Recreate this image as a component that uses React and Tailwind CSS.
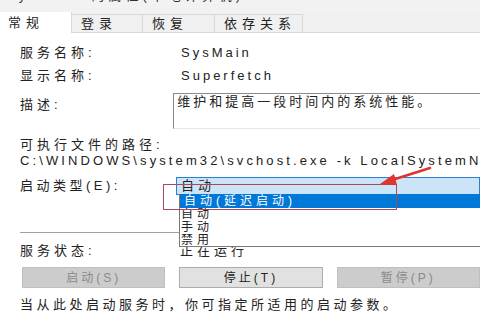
import React from "react";

const F = { fontFamily: "'Liberation Sans','Noto Sans CJK SC',sans-serif" };

function Tab({ label, active, w }) {
  return (
    <div
      className={
        active
          ? "h-[21px] bg-white border-r border-[#d9d9d9] flex items-center pl-[8px] mb-[-1px] relative z-10"
          : "h-[18px] bg-[#f0f0f0] border border-b-0 border-l-0 border-[#d9d9d9] flex items-center pl-[9px]"
      }
      style={{ width: w }}
    >
      <span className="text-[13px] leading-none tracking-[5px] text-[#222]">{label}</span>
    </div>
  );
}

export default function App() {
  return (
    <div className="w-[480px] h-[320px] bg-white relative overflow-hidden text-[#222]" style={F}>
      {/* window title strip (cut off) */}
      <div className="h-[13px] bg-[#f2f2f2] overflow-hidden">
        <div className="mt-[-12px] pl-[6px] text-[13px] leading-[16px] tracking-[4px] text-[#333] whitespace-nowrap">
          SysMain 的属性(本地计算机)
        </div>
      </div>
      {/* tabs */}
      <div className="h-[20px] bg-[#f0f0f0] border-b border-[#d9d9d9] flex items-end">
        <Tab label="常规" active w={72} />
        <Tab label="登录" w={71} />
        <Tab label="恢复" w={72} />
        <Tab label="依存关系" w={88} />
      </div>

      <div className="pl-[20px] mt-[8px]">
        <div className="h-[23px] flex items-center">
          <div className="w-[161px] text-[13px] tracking-[4px]">服务名称:</div>
          <div className="text-[13px] tracking-[3px]">SysMain</div>
        </div>
        <div className="h-[23px] flex items-center">
          <div className="w-[161px] text-[13px] tracking-[4px]">显示名称:</div>
          <div className="text-[13px] tracking-[3px]">Superfetch</div>
        </div>
        <div className="mt-[6px] flex">
          <div className="w-[160px] pt-[4px] text-[13px] leading-[16px] tracking-[4px]">描述:</div>
          <div className="w-[320px] h-[36px] border border-r-0 border-t-[#8a8a8a] border-l-[#8a8a8a] border-b-[#e6e6e6] pl-[3px] pt-[1px] text-[13px] leading-[14px] tracking-[3px] whitespace-nowrap">
            维护和提高一段时间内的系统性能。
          </div>
        </div>
        <div className="mt-[8px] h-[16px] text-[13px] leading-[16px] tracking-[4px]">可执行文件的路径:</div>
        <div className="h-[16px] text-[13px] leading-[16px] tracking-[3.1px] whitespace-nowrap overflow-hidden w-[460px]">
          C:\WINDOWS\system32\svchost.exe -k LocalSystemNetworkRestricted
        </div>
        <div className="mt-[8px] h-[18px] flex items-center">
          <div className="w-[159px] text-[13px] tracking-[3.5px]">启动类型(E):</div>
          <div className="w-[310px] h-[18px] bg-[#cce4f7] border border-[#2a7fd0] flex items-center pl-[4px] text-[13px] tracking-[4px]">
            自动
          </div>
        </div>
        <div className="mt-[37px] border-t border-[#a0a0a0] w-[460px]" />
        <div className="mt-[10px] h-[16px] flex items-center">
          <div className="w-[160px] text-[13px] tracking-[4px]">服务状态:</div>
          <div className="text-[13px] tracking-[4px]">正在运行</div>
        </div>
        <div className="mt-[8px] flex gap-[14px] pl-[2px]">
          <div className="w-[144px] h-[21px] bg-[#cccccc] border border-[#bfbfbf] flex items-center justify-center text-[12px] tracking-[3px] text-[#8a8a8a]">
            启动(S)
          </div>
          <div className="w-[144px] h-[21px] bg-[#e1e1e1] border border-[#adadad] flex items-center justify-center text-[12px] tracking-[3px] text-[#222]">
            停止(T)
          </div>
          <div className="w-[144px] h-[21px] bg-[#cccccc] border border-[#bfbfbf] flex items-center justify-center text-[12px] tracking-[3px] text-[#8a8a8a]">
            暂停(P)
          </div>
        </div>
        <div className="mt-[9px] h-[16px] text-[13px] leading-[16px] tracking-[3.5px] whitespace-nowrap">
          当从此处启动服务时，你可指定所适用的启动参数。
        </div>
      </div>

      {/* open dropdown list */}
      <div className="absolute left-[179px] top-[194px] w-[310px] h-[53px] bg-white border border-t-0 border-[#7a7a7a] z-20 text-[12px] tracking-[4px]">
        <div className="h-[14px] bg-[#0078d7] text-white leading-[14px] pl-[4px] overflow-hidden">自动(延迟启动)</div>
        <div className="h-[13px] leading-[13px] pl-[1px] overflow-hidden">自动</div>
        <div className="h-[13px] leading-[13px] pl-[1px] overflow-hidden">手动</div>
        <div className="h-[12px] leading-[12px] pl-[1px] overflow-hidden">禁用</div>
      </div>

      {/* red annotation */}
      <div className="absolute left-[163px] top-[184px] w-[234px] h-[26px] border-[1.5px] border-[#a8485a] z-30" />
      <svg className="absolute left-0 top-0 z-30" width="480" height="320" viewBox="0 0 480 320">
        <line x1="430" y1="168" x2="392" y2="180" stroke="#e2332c" strokeWidth="2.5" strokeLinecap="round" />
        <polygon points="380,184 394,174 397,185" fill="#e2332c" />
      </svg>
    </div>
  );
}
